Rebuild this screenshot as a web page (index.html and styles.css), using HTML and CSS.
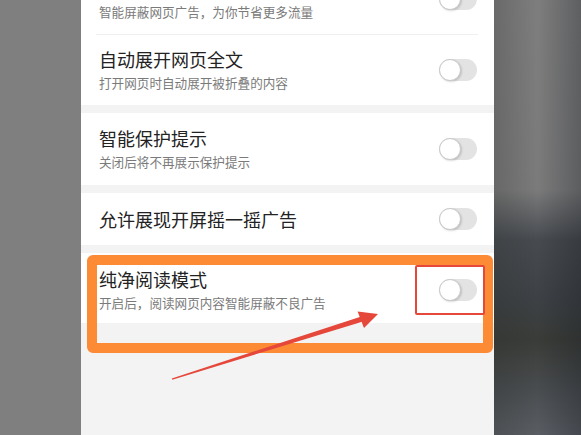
FILE: index.html
```html
<!DOCTYPE html>
<html lang="zh-CN">
<head>
    <meta charset="UTF-8">
    <meta name="viewport" content="width=device-width, initial-scale=1.0">
    <title>浏览设置</title>
    <link rel="stylesheet" href="styles.css">
</head>
<body>
    <div class="side side-left"></div>

    <div class="phone">
        <div class="group first">
            <div class="row tall">
                <div class="text">
                    <!-- title of this row is scrolled out of view -->
                    <div class="desc lone">智能屏蔽网页广告，为你节省更多流量</div>
                </div>
                <span class="switch"></span>
            </div>
            <div class="row tall">
                <div class="text">
                    <div class="title">自动展开网页全文</div>
                    <div class="desc">打开网页时自动展开被折叠的内容</div>
                </div>
                <span class="switch"></span>
            </div>
        </div>

        <div class="group">
            <div class="row tall big">
                <div class="text">
                    <div class="title">智能保护提示</div>
                    <div class="desc">关闭后将不再展示保护提示</div>
                </div>
                <span class="switch"></span>
            </div>
        </div>

        <div class="group">
            <div class="row short">
                <div class="text">
                    <div class="title">允许展现开屏摇一摇广告</div>
                </div>
                <span class="switch"></span>
            </div>
        </div>

        <div class="group">
            <div class="row tall lower">
                <div class="text">
                    <div class="title">纯净阅读模式</div>
                    <div class="desc">开启后，阅读网页内容智能屏蔽不良广告</div>
                </div>
                <span class="switch"></span>
            </div>
        </div>

        <div class="mark-orange"></div>
        <div class="mark-red"></div>
    </div>

    <div class="side side-right"></div>

    <svg class="arrow" width="581" height="435" viewBox="0 0 581 435">
        <polygon points="171.8,378.4 172.3,379.8 363,321.6 361.3,316.4" fill="#e5473a"/>
        <polygon points="378,314 357.6,311.4 364,328" fill="#e5473a"/>
    </svg>
</body>
</html>
```

FILE: styles.css
```css
body {
    margin: 0;
    width: 581px;
    height: 435px;
    overflow: hidden;
    display: flex;
    font-family: "Noto Sans CJK SC", "Noto Sans", sans-serif;
    position: relative;
}
.side-left {
    width: 81px;
    background-color: #7f7f7f;
}
.side-right {
    flex: 1;
    background:
        linear-gradient(90deg, rgba(40, 44, 40, 0.25), rgba(0, 0, 0, 0) 50%, rgba(20, 24, 30, 0.3)),
        linear-gradient(180deg, #7e7e7e 0px, #7b7b7b 190px, #474b50 240px, #3d4145 300px, #3a3c38 340px, #4a4d50 390px, #5a5e64 435px);
}
.phone {
    width: 413px;
    background-color: #f3f3f3;
    position: relative;
}
.group {
    background-color: #fff;
    margin-bottom: 8px;
}
.group.first {
    margin-top: -36px;
}
.group:last-of-type {
    margin-bottom: 0;
}
.row {
    display: flex;
    align-items: center;
    justify-content: space-between;
    padding: 0 17px 0 18px;
    position: relative;
}
.row.tall {
    height: 70px;
}
.row.big {
    height: 72px;
}
.row.short {
    height: 52px;
}
.row.lower {
    padding-top: 4px;
    height: 66px;
}
.row.tall + .row.tall {
    margin-top: 1px;
}
.row.tall + .row.tall::before {
    content: "";
    position: absolute;
    top: -1px;
    left: 15px;
    right: 16px;
    border-top: 1px solid #efefef;
}
.title {
    font-size: 18px;
    line-height: 22px;
    color: #222;
}
.desc {
    font-size: 12.6px;
    line-height: 18px;
    color: #7a7a7a;
    margin-top: 4px;
}
.desc.lone {
    margin-top: 26px;
}
.switch {
    width: 38px;
    height: 22px;
    border-radius: 11px;
    background-color: #e3e3e3;
    position: relative;
    flex-shrink: 0;
}
.switch::after {
    content: "";
    position: absolute;
    left: 0;
    top: 0;
    width: 20px;
    height: 20px;
    border-radius: 50%;
    background-color: #fff;
    border: 1px solid #c9c9c9;
    box-shadow: 1px 1px 2px rgba(0, 0, 0, 0.15);
}
.mark-orange {
    position: absolute;
    left: 6px;
    top: 255px;
    width: 386px;
    height: 78px;
    border: 10px solid #fd8a35;
    border-radius: 6px;
}
.mark-red {
    position: absolute;
    left: 334px;
    top: 265px;
    width: 66px;
    height: 46px;
    border: 2.5px solid #e5473a;
    border-radius: 2px;
}
.arrow {
    position: absolute;
    left: 0;
    top: 0;
}
```
